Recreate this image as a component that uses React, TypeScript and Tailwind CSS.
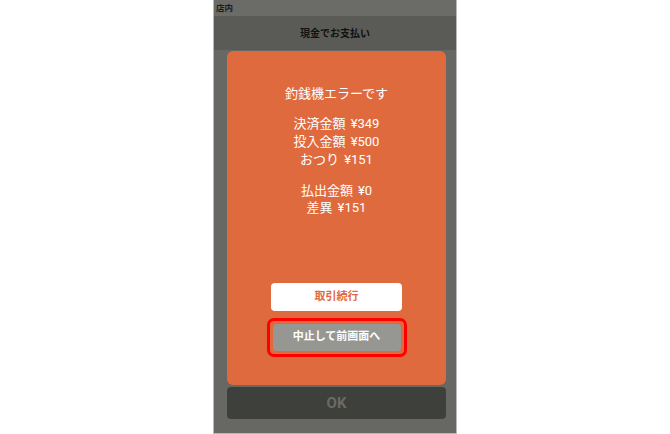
import React from "react";

function Line({ label, value }: { label: string; value: string }) {
  return (
    <div>
      {label}
      <span className="ml-[5px]">¥{value}</span>
    </div>
  );
}

export default function App() {
  const jp = { fontFamily: 'Roboto, "Noto Sans CJK JP", "Noto Sans", sans-serif' };
  return (
    <div className="w-[670px] h-[434px] bg-white flex justify-center" style={jp}>
      <div className="w-[244px] h-[434px] border-x border-b border-[#b8b8b6] bg-[#676864] flex flex-col">
        <div className="h-[16px] bg-[#6b6c68] flex items-center pl-[2px] pt-[1px] text-[8.5px] font-bold text-[#1c1c1c] leading-none">
          店内
        </div>
        <div className="h-[34px] bg-[#5a5b57] flex items-center justify-center text-[10px] font-bold text-[#111111]">
          現金でお支払い
        </div>
        <div className="flex flex-col ml-[13px] mr-[10px] mt-[1px]">
          <div className="h-[334px] bg-[#df6a3e] rounded-[6px] flex flex-col items-center text-white text-[13px] pt-[34px]">
            <div className="leading-[17px]">釣銭機エラーです</div>
            <div className="mt-[13px] flex flex-col items-center leading-[18px]">
              <Line label="決済金額" value="349" />
              <Line label="投入金額" value="500" />
              <Line label="おつり" value="151" />
            </div>
            <div className="mt-[13px] flex flex-col items-center leading-[17px]">
              <Line label="払出金額" value="0" />
              <Line label="差異" value="151" />
            </div>
            <div className="mt-auto mb-[28px] flex flex-col items-center">
              <div className="w-[131px] h-[28px] bg-white rounded-[4px] flex items-center justify-center text-[11px] font-bold text-[#df6a3e]">
                取引続行
              </div>
              <div className="mt-[7px] border-[3px] border-[#ff0000] rounded-[7px] p-[3px]">
                <div className="w-[128px] h-[27px] bg-[#969793] rounded-[4px] flex items-center justify-center text-[11px] font-bold text-white">
                  中止して前画面へ
                </div>
              </div>
            </div>
          </div>
          <div className="mt-[2px] h-[32px] bg-[#3e403c] rounded-[4px] flex items-center justify-center text-[15px] font-bold text-[#6a6b67]">
            OK
          </div>
        </div>
      </div>
    </div>
  );
}
